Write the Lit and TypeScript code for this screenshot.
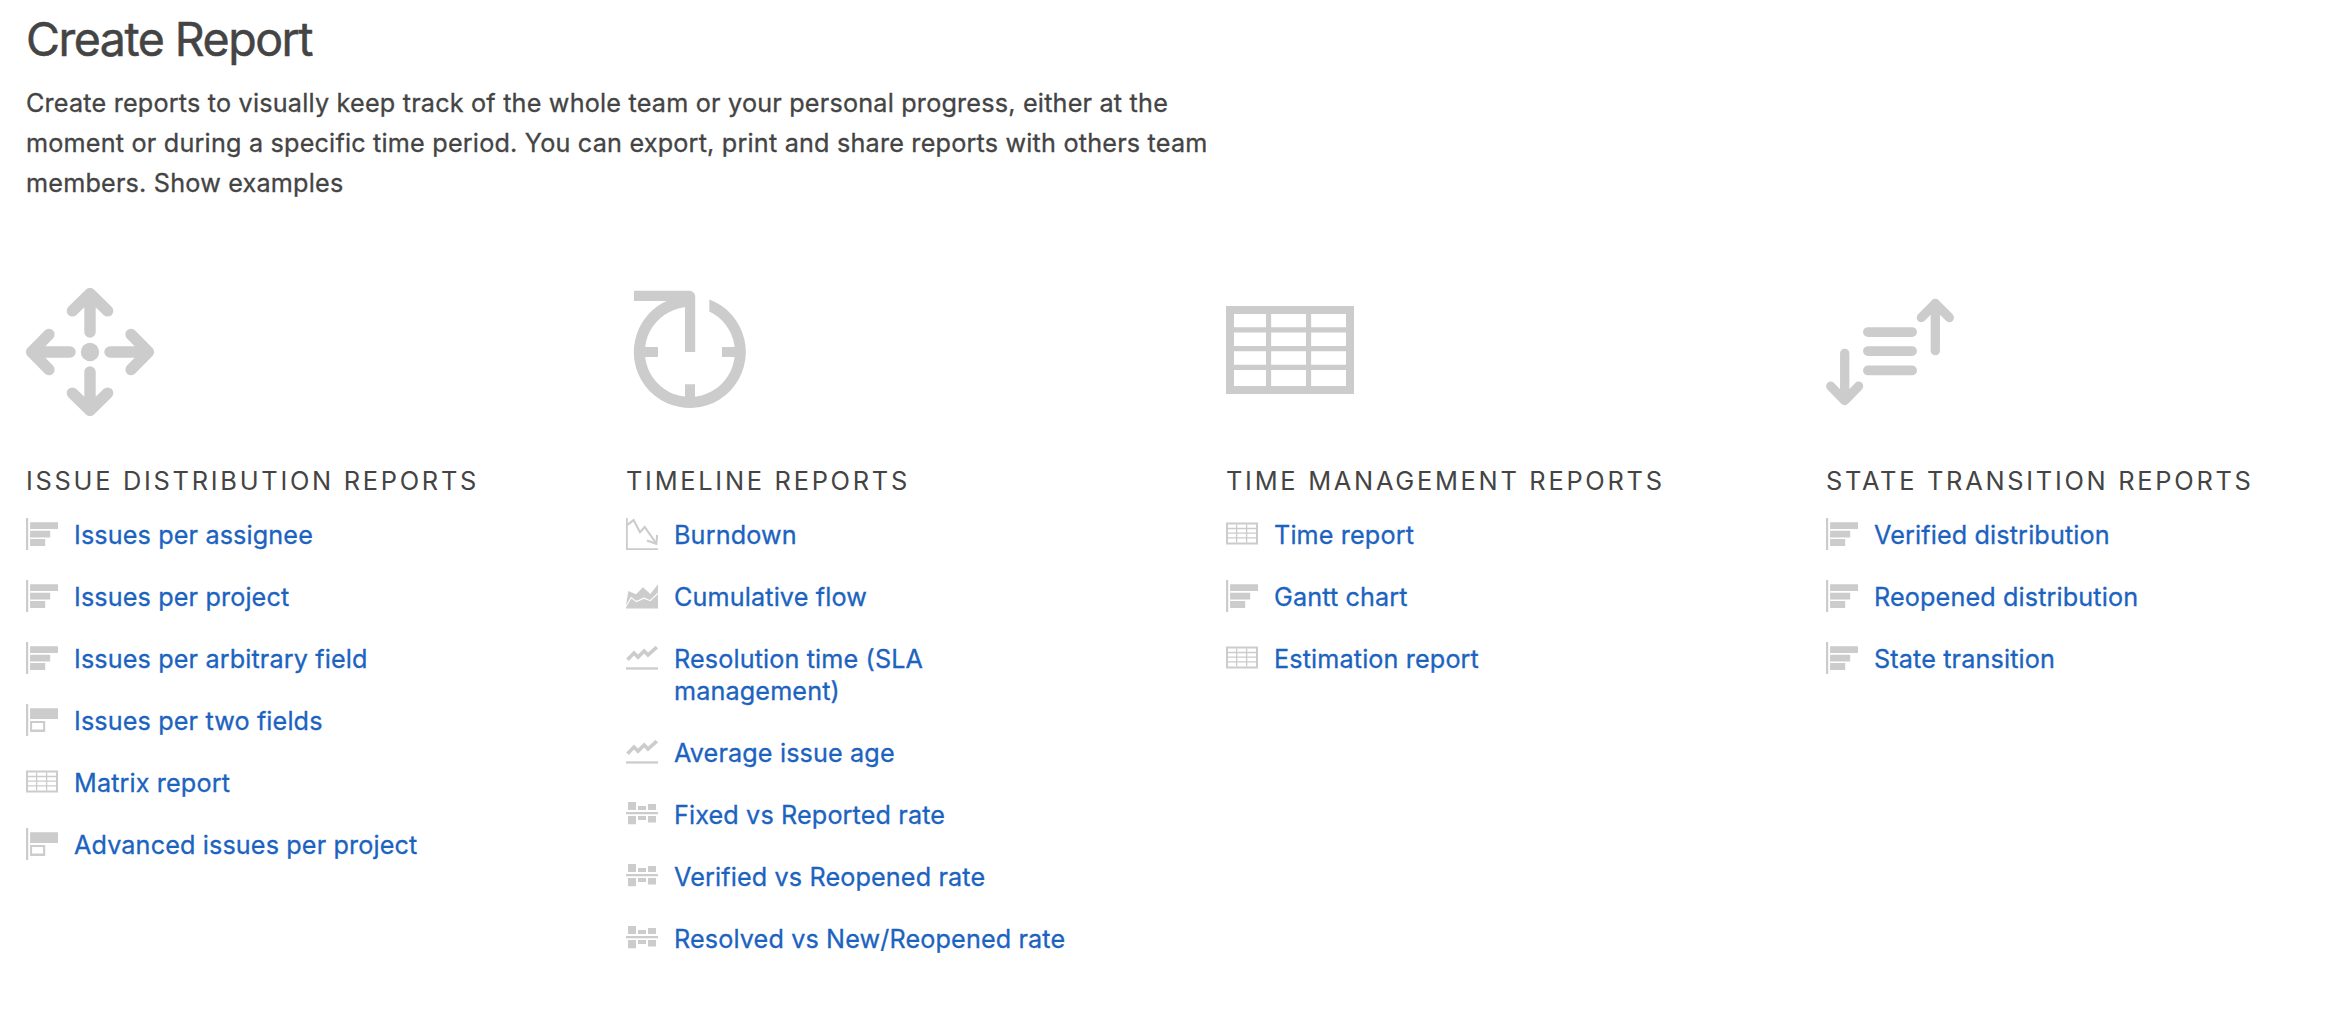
import { LitElement, html, svg, css } from "lit";
import { customElement, property } from "lit/decorators.js";

const tableIcon = svg`
  <path fill-rule="evenodd" d="M0 18H128V106H0Z M8 26V98H120V26Z"/>
  <path d="M40 26H45.15V98H40Z M80 26H85.15V98H80Z M8 39.2H120V44.6H8Z M8 58H120V63.2H8Z M8 76.8H120V82H8Z"/>`;

const arrow = svg`<path d="M64 5.6V44 M46.4 22.9L64 5.6L81.6 22.9"/>`;

const large: Record<string, unknown> = {
  distribution: svg`
    <circle cx="64" cy="64" r="9.2"/>
    <g fill="none" stroke="#ccc" stroke-width="11.4" stroke-linecap="round" stroke-linejoin="round">
      ${[0, 90, 180, 270].map((a) => svg`<g transform="rotate(${a} 64 64)">${arrow}</g>`)}
    </g>`,
  timeline: svg`
    <path d="M83.3 11.5A56 56 0 1 1 64 8V19A45 45 0 1 0 83.3 23.4Z"/>
    <path d="M8 2.8H63.5A5.8 5.8 0 0 1 69.2 8.6V64H59V13.1H8Z"/>
    <path d="M18 59H32V69H18Z M96 59H110V69H96Z M59 96.2H69V110H59Z"/>`,
  table: tableIcon,
  transition: svg`
    <g fill="none" stroke="#ccc" stroke-width="9.3" stroke-linecap="round" stroke-linejoin="round">
      <path d="M109.3 15.4V62.7 M95.4 29.6L109.3 15.4L123.3 29.6"/>
      <path d="M18.7 65.4V112.5 M4.7 98.2L18.7 112.5L32.6 98.2"/>
      <path stroke-width="9.9" d="M42 44.1H86 M42 63.1H86 M42 82.4H86"/>
    </g>`,
};

const small: Record<string, unknown> = {
  bars: svg`<path d="M0 0H2.2V32H0Z M4.1 4.2H32V10.9H4.1Z M4.1 12.7H24.2V19.4H4.1Z M4.1 21.1H19.2V27.9H4.1Z"/>`,
  twobars: svg`<path fill-rule="evenodd" d="M0 0H2.2V32H0Z M4.1 4.2H32V15H4.1Z M4.1 17.1H19.2V27.9H4.1Z M6.1 19.1V25.6H17.1V19.1Z"/>`,
  table: svg`<g transform="scale(.25)">${tableIcon}</g>`,
  burndown: svg`
    <path d="M0 0H1.8V30.2H32V32H0Z"/>
    <g fill="none" stroke="#ccc" stroke-width="2.1">
      <path d="M1 7.2L7.6 2.1L14 14.2L18.7 8.9L30.3 25.6"/>
      <path d="M20.9 22.6L30.3 25.8L31.2 16.8"/>
    </g>`,
  cumulative: svg`
    <path d="M0 28.5V25L2.3 11L10 14.3L17 7.3L24.3 14L32 4.2V28.5Z"/>
    <path fill="none" stroke="#fff" stroke-width="1.1" d="M-.3 27L5.2 17.6L10.3 21.6L18 18.2L24.3 20.7L32.3 13"/>`,
  line: svg`
    <path fill="none" stroke="#ccc" stroke-width="3.6" d="M1.5 17.8L8 11.1L12 15.1L18.2 9L22 13L30.8 5.1"/>
    <path d="M0 25.3H32V27.6H0Z"/>`,
  rate: svg`<path d="M2 4H10V12.1H2Z M12 8H20V12.1H12Z M22 6H30V12.1H22Z M0 14.1H32V16.3H0Z M2 18.1H10V26.2H2Z M12 18.1H20V22H12Z M22 18.1H30V24.4H22Z"/>`,
};

interface Group {
  icon: string;
  title: string;
  items: [string, string][];
}

const groups: Group[] = [
  {
    icon: "distribution",
    title: "Issue distribution reports",
    items: [
      ["bars", "Issues per assignee"],
      ["bars", "Issues per project"],
      ["bars", "Issues per arbitrary field"],
      ["twobars", "Issues per two fields"],
      ["table", "Matrix report"],
      ["twobars", "Advanced issues per project"],
    ],
  },
  {
    icon: "timeline",
    title: "Timeline reports",
    items: [
      ["burndown", "Burndown"],
      ["cumulative", "Cumulative flow"],
      ["line", "Resolution time (SLA\nmanagement)"],
      ["line", "Average issue age"],
      ["rate", "Fixed vs Reported rate"],
      ["rate", "Verified vs Reopened rate"],
      ["rate", "Resolved vs New/Reopened rate"],
    ],
  },
  {
    icon: "table",
    title: "Time management reports",
    items: [
      ["table", "Time report"],
      ["bars", "Gantt chart"],
      ["table", "Estimation report"],
    ],
  },
  {
    icon: "transition",
    title: "State transition reports",
    items: [
      ["bars", "Verified distribution"],
      ["bars", "Reopened distribution"],
      ["bars", "State transition"],
    ],
  },
];

@customElement("report-group")
export class ReportGroup extends LitElement {
  @property({ attribute: false }) group!: Group;

  static styles = css`
    :host { display: block; }
    svg { display: block; fill: #ccc; flex: none; }
    .title {
      margin: 47px 0 0;
      font-size: 25.4px;
      line-height: 36px;
      font-weight: 400;
      letter-spacing: 2.72px;
      text-transform: uppercase;
      white-space: nowrap;
    }
    .list {
      list-style: none;
      margin: 19px 0 0;
      padding: 0;
      display: flex;
      flex-direction: column;
      gap: 30px;
    }
    .item { display: flex; gap: 16px; align-items: flex-start; }
    .link {
      color: #1c63c0;
      text-decoration: none;
      white-space: pre;
      line-height: 32px;
      letter-spacing: 0.13px;
      -webkit-text-stroke: 0.3px #1c63c0;
      padding-top: 1px;
      margin-bottom: -1px;
    }
  `;

  render() {
    return html`
      <svg width="128" height="128" viewBox="0 0 128 128">${large[this.group.icon]}</svg>
      <h2 class="title">${this.group.title}</h2>
      <ul class="list">
        ${this.group.items.map(
          ([icon, label]) => html`<li class="item">
            <svg width="32" height="32" viewBox="0 0 32 32">${small[icon]}</svg>
            <a class="link">${label}</a>
          </li>`
        )}
      </ul>
    `;
  }
}

@customElement("app-root")
export class AppRoot extends LitElement {
  static styles = css`
    :host {
      display: block;
      box-sizing: border-box;
      height: 1024px;
      padding: 7px 26px 0;
      overflow: hidden;
      background: #fff;
      color: #444;
      font-family: Inter, "Liberation Sans", sans-serif;
      font-size: 25.2px;
      font-weight: 400;
    }
    .heading {
      margin: 0;
      font-size: 46.5px;
      line-height: 64px;
      font-weight: 400;
      letter-spacing: -1.5px;
      -webkit-text-stroke: 0.5px #444;
    }
    .intro {
      margin: 12px 0 85px;
      line-height: 40px;
      white-space: pre-line;
      letter-spacing: 0.2px;
      -webkit-text-stroke: 0.3px #444;
    }
    .groups { display: grid; grid-template-columns: repeat(4, 600px); }
  `;

  render() {
    return html`
      <h1 class="heading">Create Report</h1>
      <div class="intro">Create reports to visually keep track of the whole team or your personal progress, either at the
moment or during a specific time period. You can export, print and share reports with others team
members. Show examples</div>
      <div class="groups">
        ${groups.map((g) => html`<report-group .group=${g}></report-group>`)}
      </div>
    `;
  }
}
